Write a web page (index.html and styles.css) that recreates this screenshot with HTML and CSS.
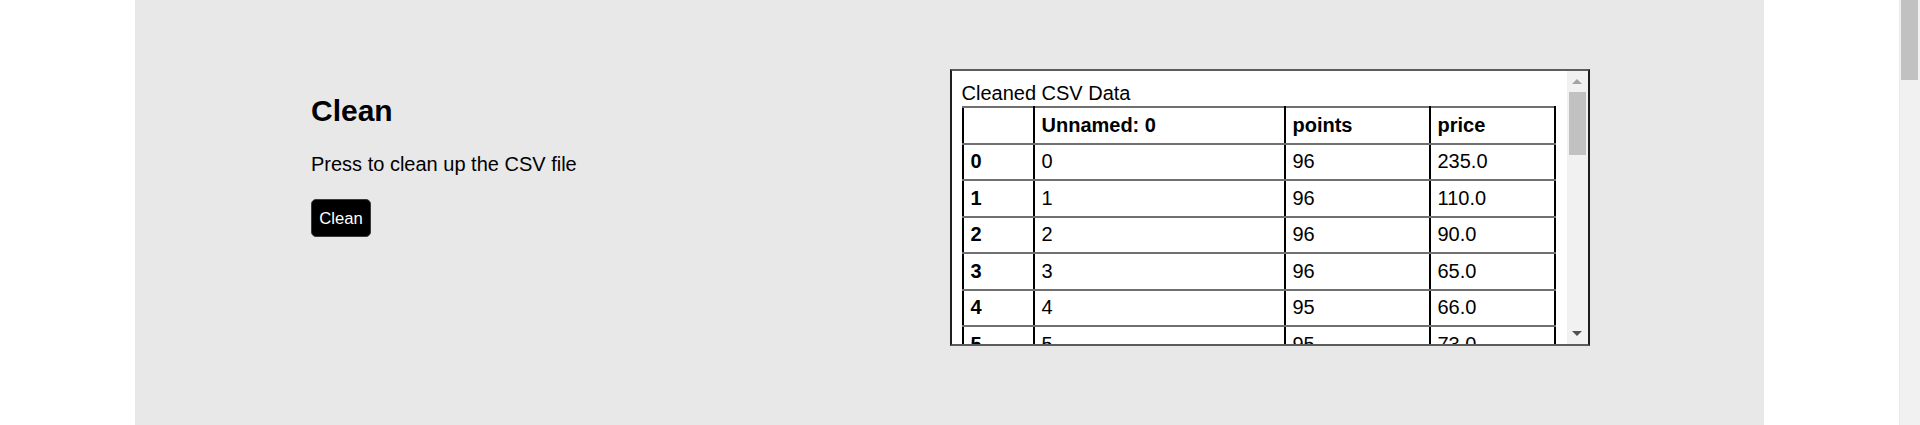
FILE: index.html
```html
<!DOCTYPE html>
<html lang="en">
<head>
<meta charset="utf-8">
<title>Clean</title>
<link rel="stylesheet" href="styles.css">
</head>
<body>
<div class="viewport">
  <div class="page">
    <section class="intro">
      <h2 class="title">Clean</h2>
      <p class="lead">Press to clean up the CSV file</p>
      <button class="btn" type="button">Clean</button>
    </section>
    <section class="output">
      <div class="panel">
        <div class="panel-body">
          <div class="caption">Cleaned CSV Data</div>
          <table class="dataframe">
            <colgroup>
              <col class="c-idx"><col class="c-unnamed"><col class="c-points"><col class="c-price">
            </colgroup>
            <thead>
              <tr><th></th><th>Unnamed: 0</th><th>points</th><th>price</th></tr>
            </thead>
            <tbody>
              <tr><th>0</th><td>0</td><td>96</td><td>235.0</td></tr>
              <tr><th>1</th><td>1</td><td>96</td><td>110.0</td></tr>
              <tr><th>2</th><td>2</td><td>96</td><td>90.0</td></tr>
              <tr><th>3</th><td>3</td><td>96</td><td>65.0</td></tr>
              <tr><th>4</th><td>4</td><td>95</td><td>66.0</td></tr>
              <tr><th>5</th><td>5</td><td>95</td><td>73.0</td></tr>
            </tbody>
          </table>
        </div>
        <div class="panel-scroll" aria-hidden="true">
          <div class="sb-btn">
            <svg width="10" height="5" viewBox="0 0 10 5"><polygon points="0,5 5,0 10,5" fill="#a3a3a3"/></svg>
          </div>
          <div class="sb-thumb"></div>
          <div class="sb-track"></div>
          <div class="sb-btn">
            <svg width="10" height="5" viewBox="0 0 10 5"><polygon points="0,0 10,0 5,5" fill="#505050"/></svg>
          </div>
        </div>
      </div>
    </section>
  </div>
</div>
<div class="page-scroll" aria-hidden="true">
  <div class="page-thumb"></div>
</div>
</body>
</html>
```

FILE: styles.css
```css
html, body {
  margin: 0;
  padding: 0;
  background: #ffffff;
}

body {
  font-family: "Liberation Sans", Arial, sans-serif;
  font-size: 20px;
  color: #000;
  display: flex;
  height: 425px;
  overflow: hidden;
}

.viewport {
  flex: 1;
  min-width: 0;
  height: 425px;
  overflow: hidden;
}

.page-scroll {
  width: 21px;
  flex: none;
  height: 425px;
  background: #f1f1f1;
  box-shadow: inset 1px 0 0 #e9e9e9;
  padding: 0 2px;
  box-sizing: border-box;
}

.page-thumb {
  height: 80px;
  background: #c1c1c1;
}

.page {
  margin: 0 135px;
  height: 425px;
  background: #e8e8e8;
  display: grid;
  grid-template-columns: 1fr 1fr;
  align-items: start;
  padding-top: 69px;
  box-sizing: border-box;
}

.intro {
  padding-left: 176px;
  padding-top: 25px;
}

.title {
  margin: 0;
  font-size: 30px;
  font-weight: bold;
  line-height: 34.5px;
}

.lead {
  margin: 24px 0 23.5px;
  line-height: 23px;
}

.btn {
  display: block;
  width: 60px;
  height: 38px;
  padding: 0;
  background: #000;
  color: #fff;
  border: 1px solid #3a3a3a;
  border-radius: 5px;
  font-family: "Liberation Sans", Arial, sans-serif;
  font-size: 16.67px;
  line-height: 19px;
}

.panel {
  width: 640px;
  height: 277px;
  box-sizing: border-box;
  background: #fff;
  border-top: 2px solid #5c5c5c;
  border-bottom: 2px solid #5c5c5c;
  border-left: 2px solid #1e1e1e;
  border-right: 2px solid #1e1e1e;
  display: flex;
}

.panel-body {
  flex: 1;
  min-width: 0;
  overflow: hidden;
  padding: 11px 0 0 10px;
}

.panel-scroll {
  width: 21px;
  flex: none;
  background: #f1f1f1;
  display: flex;
  flex-direction: column;
}

.sb-btn {
  height: 21px;
  flex: none;
  display: flex;
  align-items: center;
  justify-content: center;
}

.sb-btn svg {
  display: block;
}

.sb-thumb {
  height: 63px;
  flex: none;
  margin: 0 2px;
  background: #c1c1c1;
}

.sb-track {
  flex: 1;
}

.caption {
  line-height: 23px;
  margin-bottom: 1px;
}

.dataframe {
  border-collapse: collapse;
  table-layout: fixed;
  width: 592px;
  border-left: 2px solid #000;
  border-right: 2px solid #000;
  border-top: 2px solid #707070;
}

.c-idx { width: 71px; }
.c-unnamed { width: 251px; }
.c-points { width: 145px; }
.c-price { width: 125px; }

.dataframe th,
.dataframe td {
  text-align: left;
  padding: 5.5px 7px 6px;
  line-height: 23px;
  border-left: 2px solid #000;
  border-right: 2px solid #000;
  border-top: 2px solid #707070;
  border-bottom: 2px solid #707070;
  white-space: nowrap;
}

.dataframe th {
  font-weight: bold;
}

.dataframe td {
  font-weight: normal;
}
```
